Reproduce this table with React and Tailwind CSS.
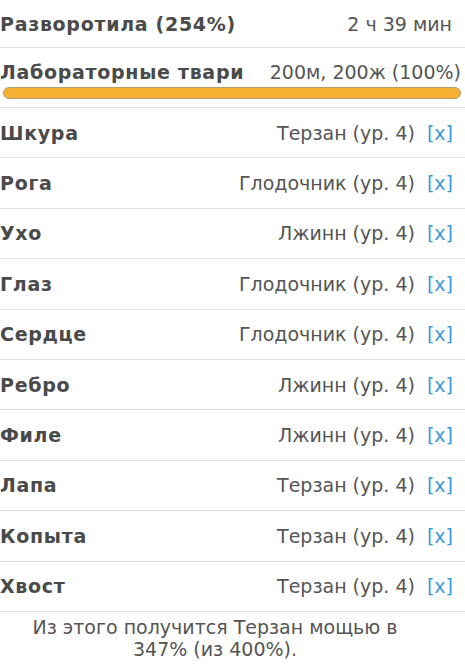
import React from 'react';

const parts = [
  ['Шкура', 'Терзан (ур. 4)'],
  ['Рога', 'Глодочник (ур. 4)'],
  ['Ухо', 'Лжинн (ур. 4)'],
  ['Глаз', 'Глодочник (ур. 4)'],
  ['Сердце', 'Глодочник (ур. 4)'],
  ['Ребро', 'Лжинн (ур. 4)'],
  ['Филе', 'Лжинн (ур. 4)'],
  ['Лапа', 'Терзан (ур. 4)'],
  ['Копыта', 'Терзан (ур. 4)'],
  ['Хвост', 'Терзан (ур. 4)'],
];

const App = () => {
  return (
    <div className="w-[465px] h-[672px] bg-white text-[19px] leading-[22px] text-[#555] overflow-hidden" style={{ fontFamily: '"DejaVu Sans", Verdana, sans-serif' }}>
      <div className="h-[48px] flex items-center justify-between border-b border-[#dedede]">
        <span className="font-bold tracking-[0.7px] text-[#4a4a4a]">Разворотила (254%)</span>
        <span className="pr-[13px]">2 ч 39 мин</span>
      </div>

      <div className="pt-[13px] pb-[8px] border-b border-[#dedede]">
        <div className="flex items-center justify-between">
          <span className="font-bold tracking-[0.7px] text-[#4a4a4a]">Лабораторные твари</span>
          <span className="pr-[4px]">200м, 200ж (100%)</span>
        </div>
        <div className="mt-[4px] ml-[3px] mr-[4px] h-[12px] rounded-full bg-[#f6b132] border border-[#b49d6e]" />
      </div>

      {parts.map(([name, value]) => (
        <div key={name} className="h-[50.4px] flex items-center justify-between border-b border-[#dedede]">
          <span className="font-bold tracking-[0.7px] text-[#4a4a4a]">{name}</span>
          <span className="flex items-center gap-[12px] pr-[12px]">
            <span>{value}</span>
            <a href="#" className="text-[#3a9ad9]">[x]</a>
          </span>
        </div>
      ))}

      <p className="w-[400px] ml-[15px] pt-[4px] text-center">
        Из этого получится Терзан мощью в 347% (из 400%).
      </p>
    </div>
  );
};

export default App;
